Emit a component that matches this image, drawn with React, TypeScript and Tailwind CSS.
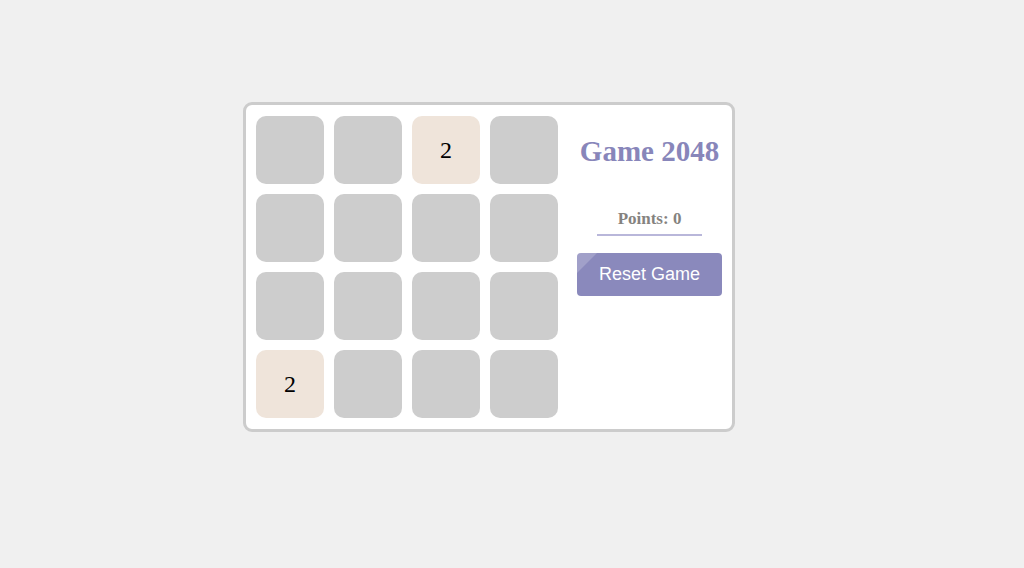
import React from 'react';

const board = [
  [0, 0, 2, 0],
  [0, 0, 0, 0],
  [0, 0, 0, 0],
  [2, 0, 0, 0],
];

const Tile = ({ value }: { value: number }) => (
  <div
    className={
      'w-[68px] h-[68px] rounded-[10px] flex items-center justify-center text-[24px] text-black ' +
      (value ? 'bg-[#efe4da]' : 'bg-[#cdcdcd]')
    }
    style={{ fontFamily: '"Liberation Serif", serif' }}
  >
    {value ? value : ''}
  </div>
);

export default function App() {
  return (
    <div className="min-h-screen w-full bg-[#f0f0f0] pt-[102px] pl-[243px]">
      <div className="inline-flex bg-white border-[3px] border-[#cccccc] rounded-[9px] pt-[11px] pb-[11px] pl-[10px] pr-[10px] gap-[19px]">
        <div className="grid grid-cols-4 gap-[10px]">
          {board.flat().map((v, i) => (
            <Tile key={i} value={v} />
          ))}
        </div>

        <div className="w-[145px] flex flex-col items-center">
          <h1
            className="mt-[18px] text-[29px] leading-[34px] font-bold text-[#8886ba] whitespace-nowrap"
            style={{ fontFamily: '"Liberation Serif", serif' }}
          >
            Game 2048
          </h1>
          <div
            className="mt-[40px] px-[21px] pb-[5px] border-b-[2px] border-[#b9b7da] text-[17px] leading-[21px] font-bold text-[#85837f]"
            style={{ fontFamily: '"Liberation Serif", serif' }}
          >
            Points: 0
          </div>
          <button
            className="relative overflow-hidden mt-[17px] w-[145px] h-[43px] rounded-[4px] bg-[#8a89bc] text-white text-[18px]"
            style={{ fontFamily: '"Liberation Sans", Arial, sans-serif' }}
          >
            <span className="absolute left-0 top-0 w-0 h-0 border-t-[20px] border-r-[20px] border-t-white/20 border-r-transparent" />
            Reset Game
          </button>
        </div>
      </div>
    </div>
  );
}
